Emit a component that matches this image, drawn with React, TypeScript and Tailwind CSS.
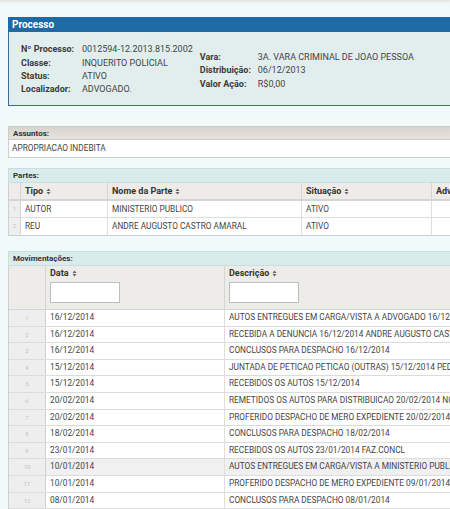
import type { ReactElement } from "react";

// --- Data ---

const PROCESSO_LEFT = [
  ["Nº Processo:", "0012594-12.2013.815.2002"],
  ["Classe:", "INQUERITO POLICIAL"],
  ["Status:", "ATIVO"],
  ["Localizador:", "ADVOGADO."],
];

const PROCESSO_RIGHT = [
  ["Vara:", "3A. VARA CRIMINAL DE JOAO PESSOA"],
  ["Distribuição:", "06/12/2013"],
  ["Valor Ação:", "R$0,00"],
];

const PARTES = [
  { tipo: "AUTOR", nome: "MINISTERIO PUBLICO", situacao: "ATIVO" },
  { tipo: "REU", nome: "ANDRE AUGUSTO CASTRO AMARAL", situacao: "ATIVO" },
];

const MOVIMENTACOES = [
  ["16/12/2014", "AUTOS ENTREGUES EM CARGA/VISTA A ADVOGADO 16/12/2014"],
  ["16/12/2014", "RECEBIDA A DENUNCIA 16/12/2014 ANDRE AUGUSTO CASTRO AMARAL"],
  ["16/12/2014", "CONCLUSOS PARA DESPACHO 16/12/2014"],
  ["15/12/2014", "JUNTADA DE PETICAO PETICAO (OUTRAS) 15/12/2014 PEDIDO"],
  ["15/12/2014", "RECEBIDOS OS AUTOS 15/12/2014"],
  ["20/02/2014", "REMETIDOS OS AUTOS PARA DISTRIBUICAO 20/02/2014 NOVA"],
  ["20/02/2014", "PROFERIDO DESPACHO DE MERO EXPEDIENTE 20/02/2014"],
  ["18/02/2014", "CONCLUSOS PARA DESPACHO 18/02/2014"],
  ["23/01/2014", "RECEBIDOS OS AUTOS 23/01/2014 FAZ.CONCL"],
  ["10/01/2014", "AUTOS ENTREGUES EM CARGA/VISTA A MINISTERIO PUBLICO"],
  ["10/01/2014", "PROFERIDO DESPACHO DE MERO EXPEDIENTE 09/01/2014"],
  ["08/01/2014", "CONCLUSOS PARA DESPACHO 08/01/2014"],
];

// --- Bits ---

function SortIcon(): ReactElement {
  return (
    <svg width="5" height="7" viewBox="0 0 5 7" className="ml-[3px] inline-block">
      <path d="M2.5 0.5 L4.5 3 L0.5 3 Z M0.5 4 L4.5 4 L2.5 6.5 Z" fill="#666" />
    </svg>
  );
}

function SectionHeader({ label }: { label: string }): ReactElement {
  return (
    <div className="h-[15px] border border-[#c9dede] bg-[#d8ecec] px-[4px] text-[8px] font-bold leading-[14px] text-[#333]">
      {label}
    </div>
  );
}

// --- Main ---

export default function App(): ReactElement {
  return (
    <div className="h-[509px] w-[450px] overflow-hidden bg-[#f1fafa] font-['Roboto',sans-serif] text-[#333]">
      <div className="h-[4px] bg-gradient-to-b from-[#e4e4e4] to-[#f7fafa]" />
      <div className="w-[620px] pl-[8px] pt-[13px]">
        {/* Processo */}
        <div className="h-[15px] bg-[#1f69a5] px-[4px] text-[10px] font-bold leading-[15px] text-white">
          Processo
        </div>
        <div className="flex h-[74px] items-center gap-[7px] border border-t-0 border-[#3a6d95] bg-[#e2eeee] pl-[12px] text-[9px] leading-[13.3px]">
          <div className="grid grid-cols-[61px_auto] pt-[3px]">
            {PROCESSO_LEFT.map(([k, v]) => (
              <div key={k} className="contents">
                <span className="font-bold text-[#3a3a3a]">{k}</span>
                <span className="text-[#444]">{v}</span>
              </div>
            ))}
          </div>
          <div className="grid grid-cols-[58px_auto] pt-[5px]">
            {PROCESSO_RIGHT.map(([k, v]) => (
              <div key={k} className="contents">
                <span className="font-bold text-[#3a3a3a]">{k}</span>
                <span className="text-[#444]">{v}</span>
              </div>
            ))}
          </div>
        </div>

        {/* Assuntos */}
        <div className="mt-[20px] h-[14px] border border-[#cfcbc4] bg-gradient-to-b from-[#d8d4ce] to-[#e6e3de] px-[4px] text-[8px] font-bold leading-[13px]">
          Assuntos:
        </div>
        <div className="h-[18px] border border-t-0 border-[#cfcfcf] bg-white px-[3px] text-[8.3px] leading-[17px] text-[#444]">
          APROPRIACAO INDEBITA
        </div>

        {/* Partes */}
        <div className="mt-[10px]">
          <SectionHeader label="Partes:" />
          <div className="border-x border-b border-[#cfcfcf] bg-white text-[8.3px]">
            <div className="grid h-[18px] grid-cols-[12px_87px_194px_130px_1fr] border-b-2 border-[#d5d5d5] bg-[#eeece8] font-bold text-[9px] leading-[17px]">
              <div className="border-r border-[#d5d5d5]" />
              <div className="border-r border-[#d5d5d5] pl-[4px]">
                Tipo<SortIcon />
              </div>
              <div className="border-r border-[#d5d5d5] pl-[4px]">
                Nome da Parte<SortIcon />
              </div>
              <div className="border-r border-[#d5d5d5] pl-[4px]">
                Situação<SortIcon />
              </div>
              <div className="pl-[4px]">Advogados</div>
            </div>
            {PARTES.map((p, i) => (
              <div
                key={p.tipo}
                className="grid h-[17px] grid-cols-[12px_87px_194px_130px_1fr] border-b border-[#dedede] leading-[16px] text-[#444] last:border-b-0"
              >
                <div className="border-r border-[#d5d5d5] bg-[#eeeeee] text-center text-[6px] text-[#c4c4c4]">
                  {i + 1}
                </div>
                <div className="border-r border-[#dedede] pl-[4px]">{p.tipo}</div>
                <div className="border-r border-[#dedede] pl-[4px]">{p.nome}</div>
                <div className="border-r border-[#dedede] pl-[4px]">{p.situacao}</div>
                <div />
              </div>
            ))}
          </div>
        </div>

        {/* Movimentações */}
        <div className="mt-[15px]">
          <SectionHeader label="Movimentações:" />
          <div className="border-x border-[#cfcfcf] bg-white text-[8.3px]">
            <div className="grid h-[44px] grid-cols-[37px_179px_1fr] border-b border-[#d5d5d5] bg-[#eeece8] text-[9px] font-bold">
              <div className="border-r border-[#d5d5d5]" />
              <div className="border-r border-[#d5d5d5] pl-[4px] pt-[1px]">
                <div className="leading-[12px]">
                  Data<SortIcon />
                </div>
                <div className="mt-[3px] h-[21px] w-[70px] border border-[#bdbdbd] bg-white" />
              </div>
              <div className="pl-[4px] pt-[1px]">
                <div className="leading-[12px]">
                  Descrição<SortIcon />
                </div>
                <div className="mt-[3px] h-[21px] w-[70px] border border-[#bdbdbd] bg-white" />
              </div>
            </div>
            {MOVIMENTACOES.map(([data, desc], i) => (
              <div
                key={i}
                className={`grid h-[16.6px] grid-cols-[37px_179px_1fr] border-b border-[#dcdcdc] leading-[15.6px] text-[#444] ${
                  i === 9 ? "bg-[#f0f0f0]" : "bg-white"
                }`}
              >
                <div className="border-r border-[#d0d0d0] bg-[#eeeeee] text-center text-[6px] text-[#c4c4c4]">
                  {i + 1}
                </div>
                <div className="border-r border-[#dedede] pl-[4px]">{data}</div>
                <div className="overflow-hidden whitespace-nowrap pl-[4px]">{desc}</div>
              </div>
            ))}
          </div>
        </div>
      </div>
    </div>
  );
}
